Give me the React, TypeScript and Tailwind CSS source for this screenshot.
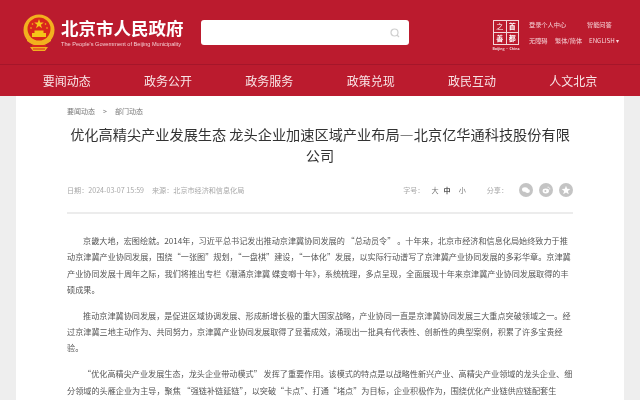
const cjk = "font-['Noto_Sans_CJK_SC','Liberation_Sans',sans-serif]";

const navItems = ['要闻动态', '政务公开', '政务服务', '政策兑现', '政民互动', '人文北京'];

function Emblem() {
  return (
    <svg width="36" height="38" viewBox="0 0 36 38" className="shrink-0">
      <circle cx="18" cy="16" r="15.5" fill="#f2b01e" />
      <circle cx="18" cy="15" r="11.5" fill="#d9261c" />
      <polygon points="18,5 19.2,8.6 22.8,8.6 19.9,10.8 21,14.2 18,12.1 15,14.2 16.1,10.8 13.2,8.6 16.8,8.6" fill="#f5c518" />
      <circle cx="11.5" cy="10" r="0.8" fill="#f5c518" />
      <circle cx="24.5" cy="10" r="0.8" fill="#f5c518" />
      <circle cx="10" cy="14" r="0.8" fill="#f5c518" />
      <circle cx="26" cy="14" r="0.8" fill="#f5c518" />
      <rect x="11" y="19" width="14" height="4" fill="#f5c518" />
      <rect x="13.5" y="16.5" width="9" height="2.5" fill="#f5c518" />
      <path d="M6 24 Q18 34 30 24 L30 27 Q18 36 6 27 Z" fill="#f2b01e" />
      <rect x="11" y="31" width="14" height="2" fill="#d9261c" />
      <path d="M9 33 L27 33 L24 37 L12 37 Z" fill="#f2b01e" />
      <rect x="12" y="34.5" width="12" height="1" fill="#d9261c" />
    </svg>
  );
}

function CapitalLogo() {
  return (
    <div className="flex flex-col items-center w-[28px]">
      <div className="grid grid-cols-2 grid-rows-2 w-[26px] h-[25px] border border-[#f3d6da] bg-[#f3d6da] gap-[1px]">
        <div className="bg-[#bb1b2e] flex items-center justify-center text-[7px] leading-none text-white">之</div>
        <div className="bg-[#bb1b2e] flex items-center justify-center text-[7px] leading-none text-white font-bold">首</div>
        <div className="bg-[#bb1b2e] flex items-center justify-center text-[7px] leading-none text-white font-bold">善</div>
        <div className="bg-[#bb1b2e] flex items-center justify-center text-[7px] leading-none text-white font-bold">都</div>
      </div>
      <div className="text-[3.5px] leading-[5px] mt-[1px] text-[#f3d6da] whitespace-nowrap font-bold">Beijing · China</div>
    </div>
  );
}

function ShareIcon({ children }: { children: React.ReactNode }) {
  return (
    <div className="w-[14px] h-[14px] rounded-full bg-[#c4c4c4] flex items-center justify-center">
      <svg width="10" height="10" viewBox="0 0 10 10">{children}</svg>
    </div>
  );
}

export default function App() {
  return (
    <div lang="zh-CN" className={`h-[400px] overflow-hidden bg-[#eeeeee] blur-[0.35px] ${cjk}`}>
      <header className="bg-[#bb1b2e]">
        <div className="h-[65px] flex pl-[21px] border-b border-[#a5162a]">
          <div className="pt-[14px]">
            <Emblem />
          </div>
          <div className="ml-[4px] pt-[17px] w-[124px]">
            <div className="text-[17.5px] leading-[22px] font-bold text-white whitespace-nowrap">北京市人民政府</div>
            <div className="font-['Liberation_Sans'] text-[5.6px] leading-[6px] mt-[2px] text-[#f4cdd2] whitespace-nowrap">The People's Government of Beijing Municipality</div>
          </div>
          <div className="ml-[16px] mt-[20px] w-[208px] h-[25px] bg-white rounded-[3px] flex items-center justify-end pr-[9px]">
            <svg width="10" height="10" viewBox="0 0 10 10" fill="none" stroke="#cfcfcf" strokeWidth="1.2">
              <circle cx="4.5" cy="4.5" r="3.5" />
              <path d="M7 7 L9 9" />
            </svg>
          </div>
          <div className="ml-[83px] mt-[20px]">
            <CapitalLogo />
          </div>
          <div className="ml-[9px] pt-[21px] text-[6.2px] leading-[8px] text-[#f6d5d9] whitespace-nowrap">
            <div className="flex">
              <span className="w-[58px]">登录个人中心</span>
              <span>智能问答</span>
            </div>
            <div className="flex mt-[8px]">
              <span className="w-[26px]">无障碍</span>
              <span className="w-[34px]">繁体/简体</span>
              <span>ENGLISH ▾</span>
            </div>
          </div>
        </div>
        <nav className="h-[31px] px-[16px] grid grid-cols-6 items-center">
          {navItems.map((item) => (
            <div key={item} className="text-center text-[12px] leading-[16px] text-[#f8e4e6]">{item}</div>
          ))}
        </nav>
      </header>

      <main className="mx-[16px] bg-white px-[51px] h-[304px]">
        <div className="flex pt-[11px] text-[7px] leading-[9px] text-[#777]">
          <span>要闻动态</span>
          <span className="mx-[8px]">&gt;</span>
          <span>部门动态</span>
        </div>
        <h1 className="mt-[8px] text-center text-[14.2px] leading-[21px] font-normal text-[#333]">
          优化高精尖产业发展生态 龙头企业加速区域产业布局—北京亿华通科技股份有限公司
        </h1>
        <div className="mt-[17px] pb-[15px] flex items-center justify-between border-b-2 border-[#ececec] text-[7.1px] text-[#a8a8a8]">
          <div className="flex gap-[8px]">
            <span>日期&#xFF1A;2024-03-07 15:59</span>
            <span>来源&#xFF1A;北京市经济和信息化局</span>
          </div>
          <div className="flex items-center">
            <span>字号&#xFF1A;</span>
            <span className="ml-[7px] text-[#777]">大</span>
            <span className="ml-[5px] text-[#555] font-bold">中</span>
            <span className="ml-[8px] text-[#777]">小</span>
            <span className="ml-[21px] mr-[11px]">分享&#xFF1A;</span>
            <div className="flex gap-[6px]">
              <ShareIcon>
                <ellipse cx="4" cy="4.5" rx="3" ry="2.3" fill="#fff" />
                <ellipse cx="6.5" cy="6" rx="2.4" ry="1.9" fill="#fff" />
              </ShareIcon>
              <ShareIcon>
                <ellipse cx="4.8" cy="6" rx="3.2" ry="2.4" fill="#fff" />
                <circle cx="4.4" cy="6" r="1" fill="#c4c4c4" />
                <path d="M6.5 2.2 A2 2 0 0 1 8.8 4.5" stroke="#fff" strokeWidth="0.8" fill="none" />
              </ShareIcon>
              <ShareIcon>
                <polygon points="5,0.8 6.2,3.8 9.4,4 6.9,6 7.8,9.2 5,7.4 2.2,9.2 3.1,6 0.6,4 3.8,3.8" fill="#fff" />
              </ShareIcon>
            </div>
          </div>
        </div>
        <article className="pt-[19px] text-[8.15px] leading-[16.33px] text-[#555] space-y-[9.5px]">
          <p className="indent-[16px]">
            京畿大地&#xFF0C;宏图绘就。2014年&#xFF0C;习近平总书记发出推动京津冀协同发展的 “总动员令” 。十年来&#xFF0C;北京市经济和信息化局始终致力于推动京津冀产业协同发展&#xFF0C;围绕“一张图”规划&#xFF0C;“一盘棋”建设&#xFF0C;“一体化”发展&#xFF0C;以实际行动谱写了京津冀产业协同发展的多彩华章。京津冀<br />产业协同发展十周年之际&#xFF0C;我们将推出专栏《潮涌京津冀 蝶变啷十年》&#xFF0C;系统梳理&#xFF0C;多点呈现&#xFF0C;全面展现十年来京津冀产业协同发展取得的丰硕成果。
          </p>
          <p className="indent-[16px]">
            推动京津冀协同发展&#xFF0C;是促进区域协调发展、形成新增长极的重大国家战略&#xFF0C;产业协同一直是京津冀协同发展三大重点突破领域之一。经过京津冀三地主动作为、共同努力&#xFF0C;京津冀产业协同发展取得了显著成效&#xFF0C;涌现出一批具有代表性、创新性的典型案例&#xFF0C;积累了许多宝贵经验。
          </p>
          <p className="indent-[16px]">
            “优化高精尖产业发展生态&#xFF0C;龙头企业带动模式” 发挥了重要作用。该模式的特点是以战略性新兴产业、高精尖产业领域的龙头企业、细分领域的头雁企业为主导&#xFF0C;聚焦 “强链补链延链”&#xFF0C;以突破“卡点”、打通“堵点”为目标&#xFF0C;企业积极作为&#xFF0C;围绕优化产业链供应链配套生
          </p>
        </article>
      </main>
    </div>
  );
}
